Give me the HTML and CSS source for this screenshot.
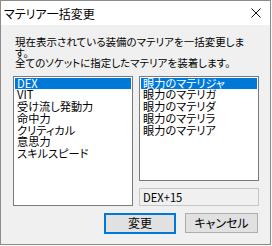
FILE: index.html
```html
<!DOCTYPE html>
<html lang="ja">
<head>
    <meta charset="UTF-8">
    <title>マテリア一括変更</title>
    <link rel="stylesheet" href="styles.css">
</head>
<body>
    <div class="window">
        <div class="titlebar">
            <span class="title">マテリア一括変更</span>
            <svg class="close" width="10" height="10" viewBox="0 0 10 10">
                <path d="M0.5 0.5 L9.5 9.5 M9.5 0.5 L0.5 9.5" stroke="#111" stroke-width="1" fill="none"/>
            </svg>
        </div>

        <div class="client">
            <!-- the dialog wraps the first sentence just before the last kana -->
            <p class="message">現在表示されている装備のマテリアを一括変更しま<br>す。<br>全てのソケットに指定したマテリアを装着します。</p>

            <div class="lists">
                <ul class="listbox">
                    <li class="selected">DEX</li>
                    <li>VIT</li>
                    <li>受け流し発動力</li>
                    <li>命中力</li>
                    <li>クリティカル</li>
                    <li>意思力</li>
                    <li>スキルスピード</li>
                </ul>
                <div class="rightCol">
                    <ul class="listbox materias">
                        <li class="selected">眼力のマテリジャ</li>
                        <li>眼力のマテリガ</li>
                        <li>眼力のマテリダ</li>
                        <li>眼力のマテリラ</li>
                        <li>眼力のマテリア</li>
                    </ul>
                    <div class="readonly">DEX+15</div>
                </div>
            </div>

            <div class="buttons">
                <button class="btn default">変更</button>
                <button class="btn">キャンセル</button>
            </div>
        </div>
    </div>
</body>
</html>
```

FILE: styles.css
```css
* {
    box-sizing: border-box;
}
body {
    margin: 0;
    background-color: #f7f9f4;
    font-family: "Noto Sans CJK JP", "Noto Sans", sans-serif;
    font-size: 11.2px;
    font-feature-settings: "palt"; /* proportional kana like the Windows UI font */
    color: #000;
}
.window {
    width: 271px;
    height: 245px;
    border: 1px solid #8c8c8c;
    display: flex;
    flex-direction: column;
}
.titlebar {
    height: 24px;
    flex-shrink: 0;
    background-color: #fff;
    display: flex;
    align-items: center;
    padding-left: 3px;
}
.title {
    font-size: 12px;
    line-height: 12px;
    padding-top: 1px;
}
.close {
    margin-left: auto;
    margin-right: 9px;
}
.client {
    flex: 1;
    background-color: #f0f0f0;
    padding: 12px 11px 0 12px;
}
.message {
    margin: 0;
    padding-left: 2px;
    font-size: 10.5px;
    line-height: 10.6px;
    white-space: nowrap;
}
.lists {
    display: flex;
    gap: 6px;
    margin-top: 7px;
}
.listbox {
    list-style: none;
    margin: 0;
    width: 120px;
    height: 130px;
    padding: 1px;
    background-color: #fff;
    border: 1px solid #7a7a7a;
}
.listbox li {
    height: 11.7px;
    line-height: 11.7px;
    padding-left: 2px;
    white-space: nowrap;
}
.listbox .selected {
    background-color: #0078d7;
    color: #fff;
}
.rightCol {
    display: flex;
    flex-direction: column;
    gap: 7px;
}
.materias {
    height: 105px;
}
.readonly {
    width: 120px;
    height: 18px;
    border: 1px solid #c6c6c6;
    background-color: #f0f0f0;
    padding-left: 3px;
    line-height: 16px;
}
.buttons {
    display: flex;
    justify-content: flex-end;
    gap: 9px;
    margin-top: 7px;
    padding-right: 1px;
}
.btn {
    width: 73px;
    height: 20px;
    padding: 0;
    font-family: inherit;
    font-size: 12px;
    font-feature-settings: "palt";
    line-height: 12px;
    color: #000;
    background-color: #e1e1e1;
    border: 1px solid #adadad;
    border-radius: 0;
}
.btn.default {
    width: 72px;
    height: 21px;
    border: 2px solid #0078d7;
}
```
